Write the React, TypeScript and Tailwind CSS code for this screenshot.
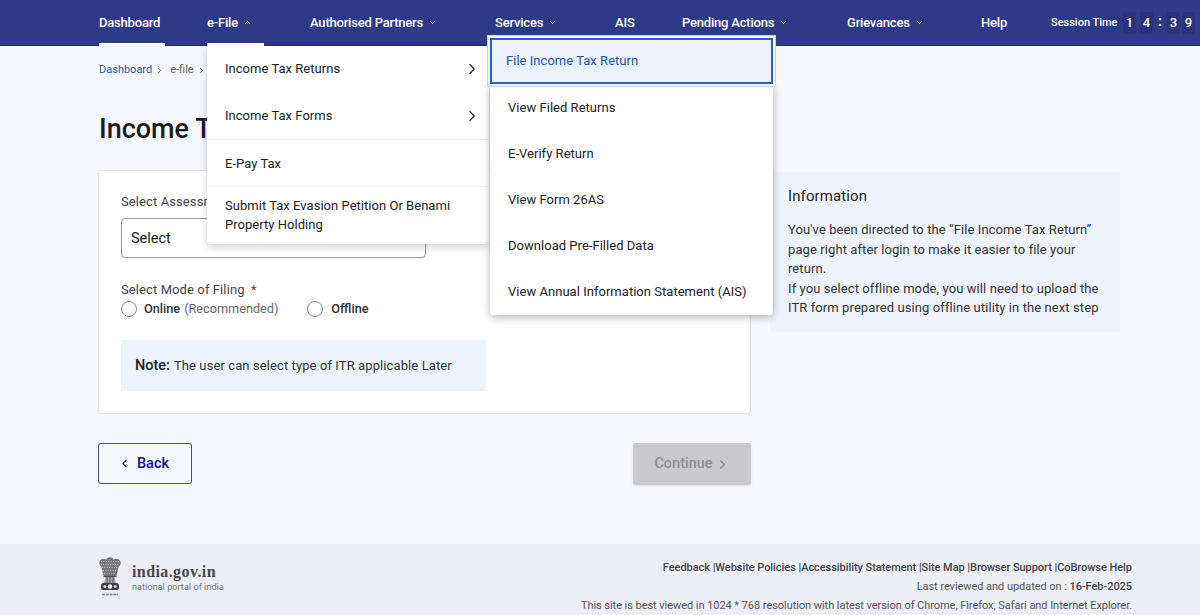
import { ChevronDown, ChevronLeft, ChevronRight, ChevronUp } from 'lucide-react';

const digits = ['1', '4', ':', '3', '9'];

const returnItems = [
  'View Filed Returns',
  'E-Verify Return',
  'View Form 26AS',
  'Download Pre-Filled Data',
  'View Annual Information Statement (AIS)',
];

function NavItem({ label, width, open, down, bar }: { label: string; width: string; open?: boolean; down?: boolean; bar?: string }) {
  return (
    <div className={`relative flex h-[46px] shrink-0 items-center text-[13px] font-medium tracking-[-0.2px] text-white ${width}`}>
      <span>{label}</span>
      {down && <ChevronDown className="ml-[5px] size-[9px]" strokeWidth={2.5} />}
      {open && <ChevronUp className="ml-[5px] size-[9px]" strokeWidth={2.5} />}
      {bar && <div className={`absolute bottom-0 left-0 h-[3px] bg-white ${bar}`} />}
    </div>
  );
}

function Emblem() {
  return (
    <svg viewBox="0 0 24 40" className="h-[40px] w-[24px]">
      {/* lion heads */}
      <g fill="#77777c">
        <circle cx="5.5" cy="6" r="4.2" />
        <circle cx="12" cy="4.5" r="4.2" />
        <circle cx="18.5" cy="6" r="4.2" />
        <path d="M3 8h18l-2.5 11h-13z" />
      </g>
      <g stroke="#e6e6ec" strokeWidth="0.7" strokeDasharray="1 1.4" fill="none">
        <path d="M3 4.5h18" />
        <path d="M2.5 7.5h19" />
        <path d="M4 10.5h16" />
        <path d="M5 13.5h14" />
        <path d="M6 16.5h12" />
      </g>
      <path d="M5.5 19.5h13" stroke="#4a4a4f" strokeWidth="1.2" />
      <path d="M7.5 20h9l1.5 6h-12z" fill="#a5a5aa" />
      <path d="M9 20v6M12 20v6M15 20v6" stroke="#55555a" strokeWidth="1" />
      {/* abacus with wheels */}
      <rect x="3" y="26" width="18" height="7" rx="2.5" fill="#3f3f44" />
      <circle cx="12" cy="29.5" r="2.3" fill="#ececf1" />
      <circle cx="6.8" cy="29.5" r="1.5" fill="#dcdce2" />
      <circle cx="17.2" cy="29.5" r="1.5" fill="#dcdce2" />
      {/* motto */}
      <path d="M4 37.5h16" stroke="#85858a" strokeWidth="1.6" strokeDasharray="3 0.8" />
    </svg>
  );
}

function EfileMenu() {
  return (
    <div className="absolute top-[46px] left-0 z-10 w-[282px] rounded-b-[4px] bg-white text-[13px] tracking-[0.03px] text-[#1c1c1f] shadow-[0_3px_8px_rgba(0,0,0,0.18)]">
      <div className="flex h-[47px] items-center justify-between pr-[8px] pb-[1px] pl-[18px]">
        Income Tax Returns
        <ChevronRight className="size-[18px]" strokeWidth={1.5} />
      </div>
      <div className="flex h-[47px] items-center justify-between border-b border-[#f3f3f5] pr-[8px] pl-[18px]">
        Income Tax Forms
        <ChevronRight className="size-[18px]" strokeWidth={1.5} />
      </div>
      <div className="flex h-[47px] items-center border-b border-[#f3f3f5] pt-[2px] pl-[18px]">E-Pay Tax</div>
      <div className="h-[57px] pt-[9px] pl-[18px] leading-[19px]">Submit Tax Evasion Petition Or Benami<br />Property Holding</div>
    </div>
  );
}

function ServicesMenu() {
  return (
    <div className="absolute top-[35px] -left-[8px] z-20 w-[289px] text-[13px] tracking-[0.03px]">
      <div className="relative z-10 h-[52px] border border-[#c4d4ee] bg-[#f3f7fd] p-[2px]">
        <div className="flex h-full items-center border-2 border-[#2e5fbd] bg-[#ecf3fc] pl-[14px] text-[#1f55b0]">File Income Tax Return</div>
      </div>
      <div className="-mt-[3px] ml-[3px] w-[283px] rounded-b-[4px] bg-white pb-[1px] text-[#1c1c1f] shadow-[0_2px_8px_rgba(0,0,0,0.3)]">
        {returnItems.map((item) => (
          <div key={item} className="flex h-[46px] items-center pt-[3px] pl-[18px] whitespace-nowrap">{item}</div>
        ))}
      </div>
    </div>
  );
}

export default function App() {
  return (
    <div className="relative flex h-[615px] w-[1200px] flex-col overflow-hidden bg-[#f6f8fd] font-['Roboto',sans-serif] text-[#1c1c1f]">
      {/* top nav */}
      <header className="flex h-[46px] shrink-0 items-center border-b border-[#222d78] bg-[#2c3a87] pl-[99px]">
        <NavItem label="Dashboard" width="w-[108px]" bar="w-[66px]" />
        <div className="relative w-[103px] shrink-0">
          <NavItem label="e-File" width="w-[57px]" open bar="w-[57px]" />
          <EfileMenu />
        </div>
        <NavItem label="Authorised Partners" width="w-[185px]" down />
        <div className="relative w-[120px] shrink-0">
          <NavItem label="Services" width="w-full" down />
          <ServicesMenu />
        </div>
        <NavItem label="AIS" width="w-[67px]" />
        <NavItem label="Pending Actions" width="w-[165px]" down />
        <NavItem label="Grievances" width="w-[134px]" down />
        <NavItem label="Help" width="w-[70px]" />
        <span className="w-[72px] shrink-0 pt-[2px] text-[11px] font-medium whitespace-nowrap text-white">Session Time</span>
        <div className="flex items-center gap-[4px]">
          {digits.map((d, i) =>
            d === ':' ? (
              <span key={i} className="w-[6px] pb-[3px] text-center text-[14px] font-bold text-white">:</span>
            ) : (
              <span key={i} className="flex h-[22px] w-[13px] items-center justify-center rounded-[2px] bg-[#28337b] text-[13px] font-medium text-white last:ml-[-2px]">{d}</span>
            ),
          )}
        </div>
      </header>

      {/* breadcrumb + title */}
      <main className="flex-1 pl-[98px]">
        <div className="mt-[17px] ml-[1px] flex h-[14px] items-center text-[11px]">
          <span className="text-[#1f5cb4]">Dashboard</span>
          <ChevronRight className="ml-[3px] size-[9px] text-[#555]" />
          <span className="ml-[6px] text-[#666]">e-file</span>
          <ChevronRight className="ml-[3px] size-[9px] text-[#555]" />
        </div>
        <h1 className="mt-[34px] ml-[1px] h-[36px] text-[27px] leading-[36px] font-medium">Income Tax Returns</h1>

        <div className="mt-[23px] flex items-start">
          <section className="h-[244px] w-[653px] shrink-0 rounded-[4px] border border-[#dfe1e6] bg-white pt-[23px] pl-[22px]">
            <label className="block h-[16px] text-[13px] leading-[16px] tracking-[0.1px] text-[#444]">Select Assessment Year</label>
            <div className="mt-[8px] flex h-[40px] w-[305px] items-center rounded-[4px] border border-[#9a9a9f] pl-[9px] text-[14.5px]">
              <span className="pt-[2px]">Select</span>
            </div>
            <div className="mt-[24px] h-[16px] text-[13px] leading-[16px] tracking-[0.1px] text-[#444]">
              Select Mode of Filing <span className="ml-[3px] text-[#b3213d]">*</span>
            </div>
            <div className="mt-[2px] flex h-[18px] items-center text-[12.7px]">
              <span className="size-[16px] rounded-full border-[1.5px] border-[#8b8b90]" />
              <span className="ml-[7px] font-medium text-[#333]">Online</span>
              <span className="ml-[4px] text-[#666]">(Recommended)</span>
              <span className="ml-[29px] size-[16px] rounded-full border-[1.5px] border-[#8b8b90]" />
              <span className="ml-[8px] font-medium text-[#333]">Offline</span>
            </div>
            <div className="mt-[22px] flex h-[51px] w-[365px] items-center bg-[#edf3fb] pl-[14px] text-[13px] tracking-[0.1px] text-[#333]">
              <span className="mr-[4px] text-[14.5px] font-medium tracking-normal text-[#1c1c1f]">Note:</span>
              The user can select type of ITR applicable Later
            </div>
          </section>

          <aside className="mt-[2px] ml-[19px] h-[160px] w-[350px] bg-[#eff4fc] pt-[15px] pl-[18px] text-[13px] leading-[19.5px] tracking-[0.09px] text-[#333]">
            <h2 className="mb-[15px] text-[15px] leading-[18px] font-normal tracking-[0.1px] text-[#1c1c1f]">Information</h2>
            <p>You've been directed to the “File Income Tax Return”<br />page right after login to make it easier to file your<br />return.</p>
            <p>If you select offline mode, you will need to upload the<br />ITR form prepared using offline utility in the next step</p>
          </aside>
        </div>

        <div className="mt-[29px] flex w-[653px] items-start justify-between">
          <button type="button" className="flex h-[41px] w-[94px] items-center justify-center rounded-[3px] border border-[#4a4f88] pr-[3px] text-[14.5px] font-medium text-[#14148a]">
            <ChevronLeft className="mr-[6px] size-[13px]" strokeWidth={2} />
            Back
          </button>
          <button type="button" disabled className="flex h-[42px] w-[118px] items-center justify-center rounded-[3px] bg-[#c8c8cd] text-[14.5px] font-medium text-[#8f8f96] shadow-[0_1px_3px_rgba(0,0,0,0.12)]">
            Continue
            <ChevronRight className="ml-[2px] size-[15px]" strokeWidth={2} />
          </button>
        </div>
      </main>

      {/* footer */}
      <footer className="flex h-[71px] shrink-0 items-start justify-between bg-[#eeeff5] pr-[68px] pl-[98px]">
        <div className="mt-[13px] flex items-center">
          <Emblem />
          <div className="mt-[2px] ml-[10px]">
            <div className="font-['Liberation_Serif',serif] text-[16px] leading-[17px] font-bold tracking-[0.4px] text-[#48484c]">india.gov.in</div>
            <div className="mt-[1px] text-[9.2px] leading-[12px] text-[#77777c]">national portal of india</div>
          </div>
        </div>
        <div className="mt-[14px] text-right text-[11px] leading-[19px] tracking-[-0.05px] text-[#555]">
          <div className="font-medium text-[#444]">Feedback |Website Policies |Accessibility Statement |Site Map |Browser Support |CoBrowse Help</div>
          <div>Last reviewed and updated on : <span className="font-medium text-[#444]">16-Feb-2025</span></div>
          <div>This site is best viewed in 1024 * 768 resolution with latest version of Chrome, Firefox, Safari and Internet Explorer.</div>
        </div>
      </footer>
    </div>
  );
}
